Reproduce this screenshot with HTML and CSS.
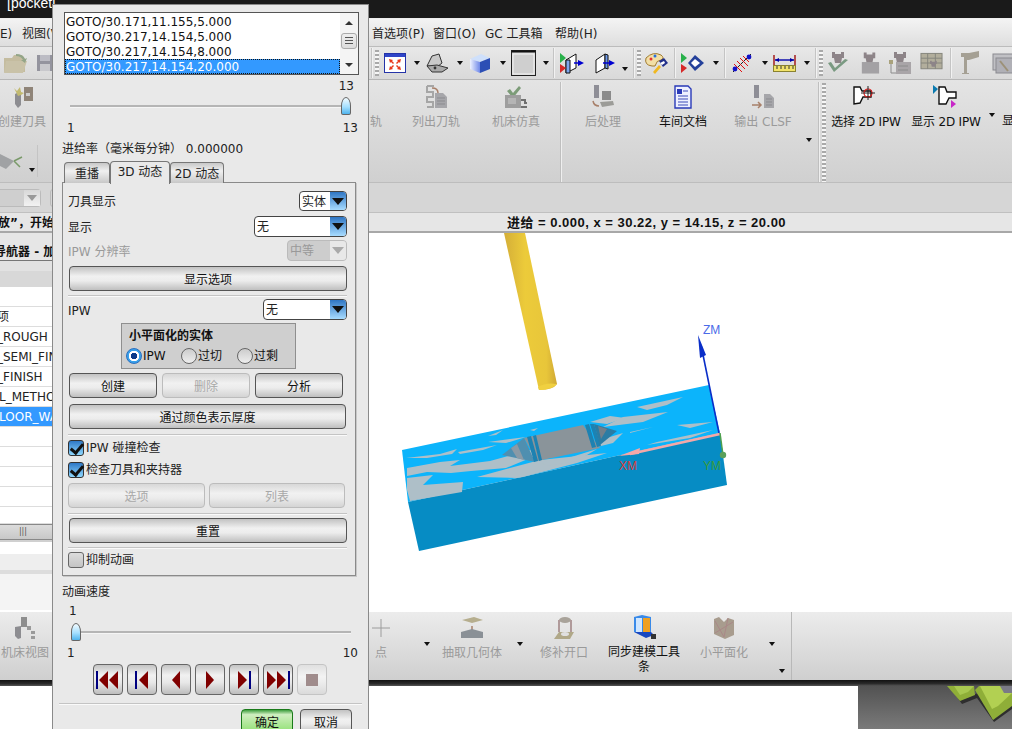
FILE: index.html
```html
<!DOCTYPE html>
<html lang="zh">
<head>
<meta charset="utf-8">
<title>pocket</title>
<link rel="stylesheet" href="styles.css">
</head>
<body>
<svg class="defs" width="0" height="0">
  <defs>
    <symbol id="gray-tool" viewBox="0 0 24 24"><path d="M6 1h3v2h6V1h3v6h-2l-1 5H9L8 7H6z" fill="#8d8488"/></symbol>
  </defs>
</svg>
<div class="app">
  <div class="titlebar"><span class="title-text">[pocketi</span></div>
  <div class="menubar">
    <span class="menu-left">E)</span><span class="menu-view">视图(V</span>
    <span class="menu-a">首选项(P)</span><span class="menu-b">窗口(O)</span><span class="menu-c">GC 工具箱</span><span class="menu-d">帮助(H)</span>
  </div>
  <div class="toolbar">
    <svg class="m3" width="25" height="23" viewBox="0 0 25 23"><path d="M1 6h8l2-3h8l3 4v13H1z" fill="#c4bc9f"/><path d="M3 9h21l-4 12H1z" fill="#c9c2a8"/><path d="M13 2q7 0 9 5l2-1-2 5-4-3h2q-2-4-7-4z" fill="#93a588"/></svg>
    <svg class="m8" width="18" height="20" viewBox="0 0 18 20"><rect x="1" y="2" width="16" height="16" fill="#94949e"/><rect x="4" y="2" width="10" height="6" fill="#bcbcc4"/><rect x="4" y="11" width="10" height="7" fill="#c8c8cc"/></svg>
    <span class="tb-gap"></span>
    <i class="vsep m2"></i><i class="grip m2"></i>
    <svg class="m5" width="22" height="20" viewBox="0 0 22 20"><rect x=".5" y=".5" width="21" height="19" fill="#fff" stroke="#2433a8"/><rect x="1" y="1" width="20" height="3" fill="#2f45c8"/><path d="M5 6l4 1-1 1 2 2-1 1-2-2-1 1zM17 6l-4 1 1 1-2 2 1 1 2-2 1 1zM5 17l4-1-1-1 2-2-1-1-2 2-1-1zM17 17l-4-1 1-1-2-2 1-1 2 2 1-1z" fill="#e8381c"/></svg>
    <i class="arrow m8"></i>
    <svg class="m6" width="23" height="20" viewBox="0 0 23 20"><path d="M1 13L6 3l7-2 3 9-5 4z" fill="#c9c9c9" stroke="#333"/><path d="M1 13l10-1 11 3-6 4H6z" fill="#aaa" stroke="#333"/><circle cx="9" cy="15" r="1.4" fill="#333"/></svg>
    <i class="arrow m8"></i>
    <svg class="m6" width="22" height="21" viewBox="0 0 22 21"><defs><linearGradient id="cubeg" x1="0" x2="1"><stop offset="0" stop-color="#eef2ff"/><stop offset="1" stop-color="#6f88e8"/></linearGradient></defs><path d="M1 6l11-5 9 4-10 4z" fill="#cfe0fb"/><path d="M1 6l10 3v11L1 16z" fill="url(#cubeg)"/><path d="M11 9l10-4v11l-10 4z" fill="#2c4fb5"/></svg>
    <i class="arrow m9"></i>
    <svg class="m5" width="25" height="26" viewBox="0 0 25 26"><rect x=".5" y=".5" width="24" height="25" fill="#d0d0d0" stroke="#222"/><rect x=".5" y=".5" width="24" height="2" fill="#111"/><rect x="2" y="4" width="21" height="20" fill="#cfcfcf" stroke="#f4f4f4"/></svg>
    <i class="arrow m7"></i>
    <i class="vsep m4"></i>
    <svg class="m5" width="24" height="22" viewBox="0 0 24 22"><path d="M6 8l10-6v14L6 21z" fill="#fff" stroke="#111"/><path d="M6 8l4 0v13H6z" fill="#7ea6ee" stroke="#111"/><path d="M0 1l6 5-6 5z" fill="#28b04a"/><path d="M0 12l6 4-6 5z" fill="#d62828"/><path d="M14 11h6" stroke="#0000d0" stroke-width="1.5"/><path d="M18 8l6 3-6 3z" fill="#0000d0"/></svg>
    <svg class="m11" width="20" height="22" viewBox="0 0 20 22"><path d="M1 8l9-6v14l-9 5z" fill="#fff" stroke="#111"/><path d="M10 2l3 1v14l-3-1z" fill="#6f9ae8" stroke="#111"/><path d="M8 11h6" stroke="#0000d0" stroke-width="1.5"/><path d="M14 8l6 3-6 3z" fill="#0000d0"/></svg>
    <i class="arrow arrow-low m7"></i>
    <i class="vsep m5"></i><i class="grip m2"></i>
    <svg class="m3" width="24" height="24" viewBox="0 0 24 24"><path d="M2 7q7-7 15-3 4 3 0 5-5 1-5 4 0 3-4 2Q0 14 2 7z" fill="#f2dfa6" stroke="#a07a30"/><circle cx="7" cy="8" r="1.5" fill="#e83030"/><circle cx="11" cy="5" r="1.5" fill="#2a70e0"/><path d="M15 10l5-3 4 5-5 4z" fill="#22308a"/><path d="M16 12l4-2 1 2-3 2z" fill="#fff"/><path d="M9 21l6-7 2 2-6 7z" fill="#f0b820"/></svg>
    <i class="vsep m6"></i>
    <svg class="m5" width="24" height="22" viewBox="0 0 24 22"><path d="M0 1l6 5-6 5z" fill="#28b04a"/><path d="M0 12l6 4-6 5z" fill="#d62828"/><path d="M14 3l9 8-9 8-7-8z" fill="#24409a"/><path d="M14 7l5 4-5 4-4-4z" fill="#fff"/></svg>
    <i class="arrow m8"></i>
    <i class="vsep m5"></i>
    <svg class="m4" width="24" height="24" viewBox="0 0 24 24"><path d="M3 21L21 3" stroke="#222"/><path d="M4 13l8 8M7 10l8 8M10 7l8 8M13 5l6 6" stroke="#e01010"/><circle cx="5" cy="18" r="2.4" fill="#1010c8"/><circle cx="19" cy="6" r="2.4" fill="#1010c8"/></svg>
    <i class="arrow m8"></i>
    <svg class="m5" width="23" height="20" viewBox="0 0 23 20"><path d="M1 2v10M22 2v10" stroke="#a01010" stroke-width="1.4"/><path d="M2 7h19" stroke="#0000a8" stroke-width="1.4"/><path d="M2 7l4-2v4zM21 7l-4-2v4z" fill="#0000a8"/><rect x=".5" y="12.5" width="22" height="6" fill="#f2e36a" stroke="#8a8230"/><path d="M4 13v3M8 13v3M12 13v3M16 13v3M20 13v3" stroke="#333"/></svg>
    <i class="arrow m8"></i>
    <i class="vsep m5"></i><i class="grip m2"></i>
    <svg class="m3" width="24" height="24" viewBox="0 0 24 24"><use href="#gray-tool"/><path d="M2 12l6 9L22 9l-3-1-10 9-4-6z" fill="#7a9a82"/></svg>
    <svg class="m8" width="23" height="24" viewBox="0 0 24 24"><use href="#gray-tool"/><rect x="4" y="11" width="18" height="12" fill="#a3a1a4"/></svg>
    <svg class="m7" width="24" height="24" viewBox="0 0 24 24"><use href="#gray-tool"/><rect x="1" y="9" width="4" height="4" fill="#a9a27c"/><rect x="8" y="11" width="15" height="12" fill="#a9a5a8"/><path d="M3 13v9h5M10 15h10M10 19h10" stroke="#8c8c8c" fill="none"/></svg>
    <svg class="m8" width="23" height="24" viewBox="0 0 24 24"><rect x="1" y="2" width="22" height="16" fill="#b2ae9c" stroke="#85857c"/><path d="M1 7h22M1 12h22M8 2v16M16 2v16" stroke="#85857c"/><use href="#gray-tool" x="7" y="9" width="14" height="14"/></svg>
    <i class="vsep m7"></i>
    <svg class="m8" width="20" height="24" viewBox="0 0 20 24"><path d="M1 2h8l10-2v6l-10 3H7v13h2v1H2v-1h2V6H1z" fill="#a5a094"/></svg>
    <svg class="m12" width="22" height="24" viewBox="0 0 22 24"><rect x="1" y="3" width="21" height="16" fill="#c0c0c4" stroke="#8a8a90"/><rect x="4" y="7" width="19" height="15" fill="#b0b0b6" stroke="#8a8a90"/><path d="M8 10l8 10" stroke="#9c9178" stroke-width="2"/></svg>
  </div>
  <div class="ribbon">
    <div class="rb-left">
      <div class="rb-item rb-first">
        <svg class="rb-icon" width="24" height="24" viewBox="0 0 24 24"><path d="M5 9l6-3v14l-3 3-3-4z" fill="#8d8d91"/><path d="M4 3l3 3 3-4 1 5 3 1-3 2-3 1-2-4z" fill="#c2ba70"/><rect x="14" y="2" width="9" height="14" fill="#8f8478"/><rect x="16" y="8" width="4" height="3" fill="#ccc"/></svg>
        <span class="rb-label dim">创建刀具</span>
      </div>
      <div class="rb-sub">
        <svg width="26" height="22" viewBox="0 0 26 22"><path d="M0 4l14 7-8 8-6-3z" fill="#a0a2a4"/><path d="M14 11l8-4M14 11l6 6" stroke="#7a9a6a" stroke-width="1.5"/></svg>
        <i class="arrow sub-arrow"></i>
      </div>
    </div>
    <div class="rb-right">
      <div class="rb-item rb-narrow"><span class="rb-icon-gap"></span><span class="rb-label dim">轨</span></div>
      <div class="rb-item">
        <svg class="rb-icon" width="24" height="24" viewBox="0 0 24 24"><path d="M3 1h7M3 1v6h6v5H3v5h6v5H3" fill="none" stroke="#a6a6a6" stroke-width="2"/><path d="M11 8h8l4 4v11H11z" fill="#a6a6aa"/><path d="M13 13h8M13 16h8M13 19h8" stroke="#8b8b8f"/><path d="M8 3q6 0 6 5" fill="none" stroke="#a8806a" stroke-width="1.5"/></svg>
        <span class="rb-label dim">列出刀轨</span>
      </div>
      <div class="rb-item">
        <svg class="rb-icon" width="24" height="24" viewBox="0 0 24 24"><path d="M3 6l3-2 3 4 6-7 2 2-8 10z" fill="#7c9c78"/><rect x="1" y="10" width="16" height="13" fill="#9e9e9e"/><rect x="4" y="13" width="8" height="6" fill="#b5b5b5"/><path d="M17 15h4v3h2M17 22h6" stroke="#707070" stroke-width="2" fill="none"/></svg>
        <span class="rb-label dim">机床仿真</span>
      </div>
      <i class="rb-sep sep-a"></i>
      <div class="rb-item">
        <svg class="rb-icon" width="24" height="24" viewBox="0 0 24 24"><rect x="3" y="0" width="5" height="13" fill="#8e8e96"/><rect x="11" y="6" width="9" height="9" fill="#8a8a8a"/><path d="M9 17l13-1 1 4-12 2z" fill="#9c9c98"/><path d="M2 16q1 5 6 5" stroke="#a8806a" stroke-width="1.5" fill="none"/></svg>
        <span class="rb-label dim">后处理</span>
      </div>
      <div class="rb-item">
        <svg class="rb-icon" width="24" height="24" viewBox="0 0 24 24"><path d="M4 1h13l3 3v19H4z" fill="#eef0ff" stroke="#2a3ab8" stroke-width="1.4"/><rect x="6" y="4" width="5" height="5" fill="#2a3ab8"/><path d="M7 11h10M7 14h10M7 17h10M7 20h10" stroke="#3a4ab8"/><path d="M12 6h5" stroke="#3a4ab8"/></svg>
        <span class="rb-label">车间文档</span>
      </div>
      <div class="rb-item">
        <svg class="rb-icon" width="24" height="24" viewBox="0 0 24 24"><rect x="3" y="0" width="5" height="13" fill="#8e8e96"/><path d="M13 9h6l4 4v10H13z" fill="#a6a6aa"/><path d="M15 14h6M15 17h6M15 20h6" stroke="#8b8b8f"/><path d="M1 20h9M7 17l3 3-3 3" stroke="#a8806a" stroke-width="1.5" fill="none"/></svg>
        <span class="rb-label dim">输出 CLSF</span>
      </div>
      <i class="arrow rb-more"></i>
      <i class="rb-sep sep-b"></i>
      <i class="grip grip-tall"></i>
      <div class="rb-item">
        <svg class="rb-icon" width="26" height="24" viewBox="0 0 26 24"><path d="M1 2h6l2 4h9v6h-8l-3 6-6 1z" fill="#fff" stroke="#111" stroke-width="1.4"/><circle cx="15" cy="8" r="4" fill="none" stroke="#e01818" stroke-width="1.2"/><path d="M15 1v14M8 8h14" stroke="#222"/></svg>
        <span class="rb-label tight">选择 2D IPW</span>
      </div>
      <div class="rb-item">
        <svg class="rb-icon" width="26" height="24" viewBox="0 0 26 24"><path d="M6 2h6l2 5h9v6h-7l-3 6-7 0z" fill="#fff" stroke="#111" stroke-width="1.4"/><path d="M0 0l5 4-5 5z" fill="#0a7ab0"/><path d="M18 15l5 4-5 4z" fill="#c828c8"/></svg>
        <span class="rb-label tight">显示 2D IPW</span>
      </div>
      <i class="arrow rb-drop"></i>
      <span class="rb-label rb-cut">显</span>
    </div>
  </div>
  <div class="selrow"><span class="fake-select"><i class="fake-arrow"></i></span><span class="fake-next"></span></div>
  <div class="status">
    <span class="status-left">放”，开始</span>
    <span class="status-text">进给 = 0.000, x = 30.22, y = 14.15, z = 20.00</span>
  </div>
  <div class="main">
    <div class="nav">
      <div class="nav-title">导航器 - 加</div>
      <div class="nav-head"></div>
      <div class="nav-row nav-blank"></div>
      <div class="nav-row">项</div>
      <div class="nav-row">_ROUGH</div>
      <div class="nav-row">_SEMI_FINISH</div>
      <div class="nav-row">_FINISH</div>
      <div class="nav-row nav-cut">L_METHOD</div>
      <div class="nav-row nav-sel">LOOR_WALL</div>
      <div class="nav-row"></div>
      <div class="nav-row"></div>
      <div class="nav-row"></div>
      <div class="nav-row"></div>
      <div class="nav-row nav-short"></div>
      <div class="nav-scroll"><span class="nav-thumb">|||</span></div>
      <div class="nav-tail"></div>
    </div>
    <div class="viewport">
      <svg class="scene" width="960" height="379" viewBox="52 233 960 379">
        <defs>
          <linearGradient id="tool" x1="0" x2="1" y1="0" y2="0">
            <stop offset="0" stop-color="#d4ae38"/><stop offset=".4" stop-color="#eccb3a"/><stop offset=".8" stop-color="#e8c63a"/><stop offset="1" stop-color="#d0a835"/>
          </linearGradient>
        </defs>
        <path d="M504 233h21l32 151q-4 6-18 6z" fill="url(#tool)"/>
        <path d="M538 387q8-5 19-3-3 5-18 6z" fill="#f0d040"/>
        <path d="M402 450L709 385 720 433 408 502z" fill="#0cb4fb"/>
        <path d="M408 502L720 433 727 485 419 551z" fill="#068cc4"/>
        <g fill="#aebfc8">
          <path d="M406 458l34-4 17-5-5 5-25 4z"/>
          <path d="M458 452l39-7-14 5-23 4z"/>
          <path d="M407 468l33-6 20-2-10 6 40-5 40-11 10 4-34 14-35 3-20 2-24-1-20 4z"/>
          <path d="M407 478l26-3-10 10 40-3-1 10-52 9-3-11z"/>
          <path d="M477 477l33-9 30-8 67-7-30 10-54 14-6 1z"/>
          <path d="M488 436l15-6-7 5zM488 442l38-5-20 6zM530 430l8-2-4 3z"/>
          <path d="M637 407l46-10-16 8-20 5z"/>
          <path d="M623 417l45-5-25 10-40 5z"/>
          <path d="M677 425l36-3-23 6z"/>
          <path d="M630 432l23-5-23 6z"/>
          <path d="M657 442l56-12-23 8-43 7z"/>
          <path d="M600 440l23-7-10 10-16 4z"/>
          <path d="M590 422l20-6 15 2-18 6z"/>
          <path d="M540 462l25-3 32-10-20 12-30 5z"/>
        </g>
        <path d="M524 438l59-13 17 23-63 13z" fill="#8a949a"/>
        <path d="M502 455l22-17 11 24z" fill="#4f8fb0"/>
        <path d="M511 448l6-4 7 16-7-2z" fill="#8a9aa6"/>
        <path d="M527 437l4-1 7 25-4 1zM533 436l3-1 6 25-3 1zM585 425l4-1 7 23-4 1zM590 424l4 0 7 22-4 1z" fill="#1d82b2"/>
        <path d="M594 424l23 7-17 14z" fill="#2a7ca4"/>
        <path d="M598 426l9 3-6 10z" fill="#707f8a"/>
        <path d="M719 433L701 345" stroke="#0a2ec8" stroke-width="1.6"/>
        <path d="M698 335l8 20-6 3z" fill="#0a2ec8"/>
        <path d="M720 434L630 454" stroke="#f4a8a8" stroke-width="2.5"/>
        <path d="M619 456l21-8-1 6z" fill="#f4a8a8"/>
        <path d="M720 433l3 22" stroke="#4da04d" stroke-width="1.5"/>
        <circle cx="723" cy="455" r="3.2" fill="#5aa05a"/>
        <text x="703" y="334" class="axis axis-z">ZM</text>
        <text x="619" y="470" class="axis axis-x">XM</text>
        <text x="703" y="470" class="axis axis-y">YM</text>
      </svg>
    </div>
  </div>
  <div class="bottombar">
    <div class="bb-item bb-left">
      <svg width="24" height="24" viewBox="0 0 24 24"><rect x="8" y="1" width="6" height="10" fill="#8e8e8e"/><path d="M2 11l6-1v12l-3 1-3-3z" fill="#8d8d91"/><path d="M14 10h4v4h-4zM18 15h4v3h-4zM18 20h4v3h-4z" fill="#9a9a9a"/></svg>
      <span class="rb-label dim">机床视图</span>
    </div>
    <span class="bb-gap"></span>
    <div class="bb-item bb-pt">
      <svg width="20" height="24" viewBox="0 0 20 24"><path d="M10 3v18M1 12h18" stroke="#9c9c9c"/></svg>
      <span class="rb-label dim">点</span>
    </div>
    <i class="arrow bb-a1"></i>
    <div class="bb-item bb-b">
      <svg width="26" height="24" viewBox="0 0 26 24"><path d="M3 4l12-3 9 3-11 3z" fill="#b6ae8e"/><path d="M13 10v5" stroke="#a8806a" stroke-width="1.5"/><path d="M2 16l11-3 11 3v6H2z" fill="#8a9096"/></svg>
      <span class="rb-label dim">抽取几何体</span>
    </div>
    <i class="arrow bb-a2"></i>
    <div class="bb-item bb-c">
      <svg width="24" height="24" viewBox="0 0 24 24"><ellipse cx="13" cy="4" rx="6" ry="3" fill="#a9a39a"/><path d="M7 4v12M19 4v12" stroke="#b09a9a" stroke-width="2"/><path d="M7 16h15l-4 7H2z" fill="#b0a888"/><ellipse cx="13" cy="18" rx="4" ry="2" fill="#e0e0e0"/></svg>
      <span class="rb-label dim">修补开口</span>
    </div>
    <div class="bb-item bb-d">
      <svg width="26" height="26" viewBox="0 0 26 26"><path d="M3 3l8-2 9 2v15H3z" fill="#3a8ae8"/><path d="M5 4h6v14H5z" fill="#cfe6ff"/><path d="M12 4h7v14h-7z" fill="#f0a020"/><path d="M3 18h17l3 3-8 3z" fill="#1848c0"/><rect x="20" y="20" width="5" height="5" fill="#333"/></svg>
      <span class="rb-label bb-wrap">同步建模工具条</span>
    </div>
    <div class="bb-item bb-e">
      <svg width="24" height="24" viewBox="0 0 24 24"><path d="M2 3l5-2 5 5 4-4 6 2v15l-9 4-11-5z" fill="#a89c8e"/><path d="M3 5l9 16 4-19M3 17L21 6" stroke="#a88" fill="none"/></svg>
      <span class="rb-label dim">小平面化</span>
    </div>
    <i class="arrow bb-a3"></i>
    <i class="arrow bb-a4"></i>
    <i class="bb-sep"></i>
  </div>
  <div class="blackline"></div>
  <div class="foot">
    <div class="corner">
      <svg class="corner-art" width="154" height="43" viewBox="858 686 154 43">
        <path d="M949 686l13 18 15-6 17 24 18-13v-5l-18 13-16-24-14 6-10-13z" fill="#2e2e2e"/>
        <path d="M947 686h27l1 9-15 6z" fill="#8fae38"/>
        <path d="M954 686h20l-6 6-8 3z" fill="#a8c850"/>
        <path d="M975 690l18 30 19-14v-20h-33z" fill="#8fae38"/>
        <path d="M980 686h32v7l-14 13-6 3z" fill="#b2d052"/>
        <path d="M1000 686h12v7h-8z" fill="#7a7a86"/>
      </svg>
    </div>
  </div>
</div>

<div class="dialog">
  <div class="listbox">
    <div class="list-rows">
      <div class="list-row">GOTO/30.171,11.155,5.000</div>
      <div class="list-row">GOTO/30.217,14.154,5.000</div>
      <div class="list-row">GOTO/30.217,14.154,8.000</div>
      <div class="list-row list-sel">GOTO/30.217,14.154,20.000</div>
    </div>
    <div class="scrollbar">
      <i class="sb-up"></i>
      <span class="sb-thumb"></span>
      <i class="sb-down"></i>
    </div>
  </div>
  <div class="slider-val val-end">13</div>
  <div class="slider sl-top"><i class="track"></i><i class="thumb thumb-end"></i></div>
  <div class="slider-ends"><span>1</span><span>13</span></div>
  <div class="feed">进给率（毫米每分钟） 0.000000</div>
  <div class="tabs">
    <span class="tab tab-a">重播</span><span class="tab tab-active">3D 动态</span><span class="tab tab-c">2D 动态</span>
  </div>
  <div class="panel">
    <div class="row row1"><span class="row-label">刀具显示</span><span class="select sel-48"><span class="sel-text">实体</span><i class="sel-arrow"></i></span></div>
    <div class="row row2"><span class="row-label">显示</span><span class="select sel-93"><span class="sel-text">无</span><i class="sel-arrow"></i></span></div>
    <div class="row row3"><span class="row-label dim">IPW 分辨率</span><span class="select sel-60 sel-off"><span class="sel-text">中等</span><i class="sel-arrow"></i></span></div>
    <button class="btn btn-wide b1">显示选项</button>
    <hr class="sep s1">
    <div class="row row3"><span class="row-label">IPW</span><span class="select sel-84"><span class="sel-text">无</span><i class="sel-arrow"></i></span></div>
    <div class="group">
      <div class="group-title">小平面化的实体</div>
      <div class="radios">
        <span class="radio-item r-ipw"><i class="radio radio-on"></i>IPW</span>
        <span class="radio-item r-cut"><i class="radio"></i>过切</span>
        <span class="radio-item"><i class="radio"></i>过剩</span>
      </div>
    </div>
    <div class="btn-row b2">
      <button class="btn btn-88">创建</button>
      <button class="btn btn-88 btn-off">删除</button>
      <button class="btn btn-88">分析</button>
    </div>
    <button class="btn btn-thick b3">通过颜色表示厚度</button>
    <hr class="sep s2">
    <div class="check c1"><i class="box box-on"></i>IPW 碰撞检查</div>
    <div class="check c2"><i class="box box-on"></i>检查刀具和夹持器</div>
    <div class="btn-row b4">
      <button class="btn btn-opt btn-off">选项</button>
      <button class="btn btn-list btn-off">列表</button>
    </div>
    <hr class="sep s3">
    <button class="btn btn-wide b5">重置</button>
    <hr class="sep s4">
    <div class="check c3"><i class="box"></i>抑制动画</div>
  </div>
  <div class="speed">动画速度</div>
  <div class="slider-val val-start">1</div>
  <div class="slider sl-bot"><i class="track track-bot"></i><i class="thumb thumb-start"></i></div>
  <div class="slider-ends ends-bot"><span>1</span><span>10</span></div>
  <div class="transport">
    <button class="tbtn"><svg width="24" height="18" viewBox="0 0 24 18"><rect x="0" y="0" width="2" height="18" fill="#000080"/><path d="M3 9l9-9v18zM13 9l9-9v18z" fill="#800000"/></svg></button>
    <button class="tbtn"><svg width="14" height="18" viewBox="0 0 14 18"><rect x="0" y="0" width="2" height="18" fill="#000080"/><path d="M4 9l9-9v18z" fill="#800000"/></svg></button>
    <button class="tbtn"><svg width="10" height="18" viewBox="0 0 10 18"><path d="M1 9l8-9v18z" fill="#800000"/></svg></button>
    <button class="tbtn"><svg width="10" height="18" viewBox="0 0 10 18"><path d="M9 9L1 0v18z" fill="#800000"/></svg></button>
    <button class="tbtn"><svg width="14" height="18" viewBox="0 0 14 18"><rect x="12" y="0" width="2" height="18" fill="#000080"/><path d="M10 9L1 0v18z" fill="#800000"/></svg></button>
    <button class="tbtn"><svg width="24" height="18" viewBox="0 0 24 18"><rect x="22" y="0" width="2" height="18" fill="#000080"/><path d="M20 9l-9-9v18zM10 9L1 0v18z" fill="#800000"/></svg></button>
    <button class="tbtn tbtn-off"><svg width="12" height="12" viewBox="0 0 12 12"><rect width="12" height="12" fill="#a08c8c"/></svg></button>
  </div>
  <hr class="sep sep-dlg">
  <div class="actions">
    <button class="btn btn-ok">确定</button>
    <button class="btn btn-cancel">取消</button>
  </div>
</div>
</body>
</html>
```
FILE: styles.css
```css
* { box-sizing: border-box; }
html, body { margin: 0; padding: 0; }
body {
  width: 1012px; height: 729px; overflow: hidden; position: relative;
  font: 12px/16px "DejaVu Sans", "Noto Sans CJK SC", sans-serif;
  color: #111; background: #fff;
}
i { display: block; font-style: normal; flex: none; }
svg { display: block; flex: none; }
.defs { position: absolute; }
.app { width: 1012px; height: 729px; display: flex; flex-direction: column; overflow: hidden; }

.titlebar { height: 18px; background: #1a1a1a; color: #fff; font: 14px/6px "Liberation Sans", sans-serif; flex: none; overflow: hidden; }
.title-text { margin-left: 7px; }

.menubar { height: 28px; flex: none; display: flex; align-items: center; padding-top: 2px; background: linear-gradient(#f3f3f3, #dedede); border-top: 1px solid #eee; color: #222; }
.menu-left { width: 22px; }
.menu-view { width: 350px; }
.menu-a { width: 61px; }
.menu-b { width: 52px; }
.menu-c { width: 70px; }

.toolbar { height: 34px; flex: none; display: flex; align-items: center; background: linear-gradient(#e8e8e8, #d9d9d9); border-top: 1px solid #bcbcbc; border-bottom: 1px solid #b6b6b6; overflow: hidden; }
.tb-gap { width: 315px; flex: none; }
.vsep { width: 2px; height: 30px; background: #c4c4c4; border-right: 1px solid #f2f2f2; }
.grip { width: 4px; height: 26px; background: repeating-linear-gradient(#a9a9a9 0 2px, #f6f6f6 2px 4px); }
.arrow { width: 0; height: 0; border: 3px solid transparent; border-top: 4px solid #111; border-bottom: 0; }
.arrow-low { margin-top: 12px; }
.m2 { margin-left: 2px; } .m3 { margin-left: 3px; } .m4 { margin-left: 4px; } .m5 { margin-left: 5px; } .m6 { margin-left: 6px; } .m7 { margin-left: 7px; }
.m8 { margin-left: 8px; } .m9 { margin-left: 9px; } .m11 { margin-left: 11px; } .m12 { margin-left: 12px; }

.ribbon { height: 103px; flex: none; display: flex; background: linear-gradient(#e4e4e4, #d0d0d0); border-bottom: 1px solid #bdbdbd; }
.rb-left { width: 369px; flex: none; }
.rb-right { flex: 1; display: flex; min-width: 0; overflow: hidden; }
.rb-item { width: 80px; flex: none; display: flex; flex-direction: column; align-items: center; padding-top: 5px; }
.rb-first { width: 44px; }
.rb-narrow { width: 27px; padding-left: 1px; align-items: flex-start; }
.rb-icon-gap { height: 24px; flex: none; }
.rb-label { margin-top: 5px; white-space: nowrap; }
.tight { letter-spacing: -.2px; }
.dim { color: #9a9a9a; }
.rb-sub { display: flex; align-items: center; margin-top: 15px; border-right: 1px solid #c4c4c4; width: 38px; height: 32px; }
.sub-arrow { margin: 18px 0 0 3px; }
.rb-sep { width: 2px; height: 100px; background: #bfbfbf; border-right: 1px solid #efefef; margin-top: 2px; }
.sep-a { margin-left: 4px; margin-right: 1px; }
.sep-b { margin-left: 6px; }
.rb-more { margin: 58px 0 0 3px; }
.grip-tall { height: 100px; margin-left: 2px; margin-top: 3px; }
.rb-drop { margin: 33px 0 0 3px; }
.rb-cut { margin: 33px 0 0 7px; color: #111; }

.selrow { height: 30px; flex: none; background: #d6d6d6; display: flex; align-items: center; border-bottom: 1px solid #c0c0c0; }
.fake-select { width: 41px; height: 18px; display: flex; justify-content: flex-end; background: #cfcfcf; border: 1px solid #bbb; border-left: 0; border-radius: 0 4px 4px 0; }
.fake-arrow { width: 16px; height: 16px; background: linear-gradient(#d8d8d8, #f2f2f2); }
.fake-arrow::after { content: ""; display: block; margin: 5px auto 0; width: 0; height: 0; border: 5px solid transparent; border-top: 6px solid #999; border-bottom: 0; }
.fake-next { width: 6px; height: 18px; margin-left: 9px; border: 1px solid #bbb; border-radius: 3px; }

.status { height: 20px; flex: none; display: flex; align-items: center; padding-top: 2px; background: #e6e6e6; border-bottom: 2px solid #a8a8a8; font-weight: bold; }
.status-left { width: 507px; white-space: nowrap; overflow: hidden; text-indent: -2px; }
.status-text { font-family: "Liberation Sans", "Noto Sans CJK SC", sans-serif; font-size: 13px; letter-spacing: .49px; white-space: nowrap; }

.main { height: 379px; flex: none; display: flex; }
.nav { width: 52px; flex: none; overflow: hidden; background: #fff; white-space: nowrap; }
.nav-title { height: 28px; line-height: 38px; font-weight: bold; background: #e6e6e6; border-bottom: 1px solid #777; text-indent: -6px; }
.nav-head { height: 26px; background: linear-gradient(#e2e2e2 0 40%, #d8d8d8 40%); }
.nav-row { height: 20px; line-height: 21px; border-bottom: 1px solid #ddd; text-indent: -3px; background: #fff; color: #222; }
.nav-cut { text-indent: -1px; }
.nav-sel { background: #3399ff; color: #fff; text-indent: -1px; }
.nav-short { height: 17px; }
.nav-scroll { height: 16px; background: linear-gradient(#dcdcdc, #c8c8c8); border-top: 1px solid #888; border-bottom: 1px solid #888; text-align: right; padding-right: 25px; line-height: 14px; color: #555; font-size: 8px; }
.nav-tail { height: 70px; background: linear-gradient(#d0d0d0 0 2px, #fff 2px 14px, #eee 14px 30px, #ddd 30px 34px, #f4f4f4 34px); }
.viewport { flex: 1; min-width: 0; background: #fff; }
.axis { font: 12px "Liberation Sans", sans-serif; }
.axis-z { fill: #4a6ae8; }
.axis-x { fill: #d84040; }
.axis-y { fill: #3a9a3a; }

.bottombar { height: 68px; flex: none; display: flex; background: linear-gradient(#ececec, #cfcfcf); }
.bb-item { flex: none; display: flex; flex-direction: column; align-items: center; padding-top: 4px; }
.bb-item .rb-label { margin-top: 5px; }
.bb-left { width: 50px; }
.bb-gap { width: 319px; flex: none; }
.bb-pt { width: 24px; }
.bb-a1 { margin: 30px 0 0 31px; }
.bb-b { width: 60px; margin-left: 12px; }
.bb-a2 { margin: 30px 0 0 15px; }
.bb-c { width: 60px; margin-left: 11px; }
.bb-d { width: 76px; margin-left: 12px; padding-top: 2px; }
.bb-wrap { white-space: normal; text-align: center; width: 76px; line-height: 15px; }
.bb-e { width: 60px; margin-left: 12px; }
.bb-a3 { margin: 30px 0 0 15px; }
.bb-a4 { margin: 57px 0 0 4px; }
.bb-sep { width: 1px; height: 68px; background: #b8b8b8; margin-left: 6px; }

.blackline { height: 6px; flex: none; background: linear-gradient(#111, #2a2a2a 60%, #555); }
.foot { flex: 1; display: flex; justify-content: flex-end; background: #fff; }
.corner { width: 154px; background: linear-gradient(#525252, #7a7a7a); }

.dialog {
  position: absolute; left: 52px; top: 4px; width: 317px; height: 740px;
  background: #e9e9e9; border: 1px solid #8a8a8a; padding: 7px 9px 0;
}
.listbox { margin-left: 2px; height: 63px; border: 1px solid #555; background: #fff; display: flex; }
.list-rows { flex: 1; padding-top: 1px; min-width: 0; }
.list-row { height: 15px; line-height: 17px; padding-left: 1px; white-space: nowrap; color: #111; }
.list-sel { background: #3399ff; color: #fff; outline: 1px dotted #111; outline-offset: -1px; }
.scrollbar { width: 18px; display: flex; flex-direction: column; align-items: center; background: #f4f4f4; padding-top: 8px; }
.sb-up { width: 0; height: 0; border: 4px solid transparent; border-bottom: 4px solid #333; border-top: 0; }
.sb-thumb { display: block; width: 16px; height: 16px; margin-top: 8px; background: repeating-linear-gradient(#555 0 1px, transparent 1px 3px) center/8px 9px no-repeat, linear-gradient(#eee, #dcdcdc); border: 1px solid #aaa; border-radius: 3px; }
.sb-down { width: 0; height: 0; border: 4px solid transparent; border-top: 4px solid #333; border-bottom: 0; margin-top: 14px; }

.slider-val { height: 14px; color: #222; }
.val-end { margin-top: 3px; text-align: right; padding-right: 5px; }
.slider { position: relative; display: flex; align-items: center; }
.sl-top { height: 19px; margin-top: 5px; padding: 0 14px 0 8px; }
.track { flex: 1; height: 3px; background: #b5b5b5; border-bottom: 1px solid #f5f5f5; }
.thumb { position: absolute; top: 0; width: 10px; height: 18px; border: 1px solid #666; border-radius: 5px 5px 2px 2px / 9px 9px 2px 2px; background: linear-gradient(#f2fbff, #a6e0ff 55%, #4fb4ee); }
.thumb-end { right: 8px; }
.slider-ends { display: flex; justify-content: space-between; height: 14px; margin-top: 4px; padding: 0 1px 0 5px; color: #222; }
.feed { margin-top: 7px; height: 14px; white-space: pre; color: #222; }
.tabs { display: flex; height: 21px; margin-top: 7px; padding-left: 2px; align-items: flex-end; position: relative; z-index: 1; }
.tab { height: 21px; line-height: 23px; text-align: center; border: 1px solid #777; border-bottom: 0; border-radius: 4px 4px 0 0; background: linear-gradient(#c8c8c8, #f0f0f0 40%, #c8c8c8); color: #222; }
.tab-a { width: 46px; }
.tab-active { width: 60px; height: 23px; line-height: 21px; background: #e9e9e9; margin-bottom: -1px; }
.tab-c { width: 54px; }

.panel { width: 294px; height: 394px; margin-top: -1px; border: 1px solid #8a8a8a; padding: 0 8px 0 5px; background: #e9e9e9; box-shadow: 1px 1px 0 #c8c8c8; }
.row { display: flex; justify-content: space-between; align-items: center; color: #222; }
.row-label { padding-top: 2px; }
.row1 { height: 20px; margin-top: 8px; }
.row2 { height: 21px; margin-top: 5px; }
.row3 { height: 21px; margin-top: 3px; }
.select { display: flex; height: 100%; background: #fff; border: 1px solid #444; border-radius: 4px; overflow: hidden; }
.sel-48 { width: 48px; } .sel-93 { width: 93px; } .sel-60 { width: 60px; } .sel-84 { width: 84px; }
.sel-text { flex: 1; padding-left: 2px; line-height: 21px; }
.sel-arrow { width: 16px; background: linear-gradient(#2f76c4, #a8dcff); }
.sel-arrow::after { content: ""; display: block; margin: 6px auto 0; width: 0; height: 0; border: 6px solid transparent; border-top: 7px solid #111; border-bottom: 0; }
.sel-off { background: #cdcdcd; border-color: #bbb; }
.sel-off .sel-text { color: #999; }
.sel-off .sel-arrow { background: #e8e8e8; }
.sel-off .sel-arrow::after { border-top-color: #aaa; }

.btn { display: block; height: 25px; padding: 2px 0 0; font: inherit; color: #111; border: 1px solid #555; border-radius: 4px; background: linear-gradient(#c2c2c2, #f1f1f1 40%, #ececec 60%, #bfbfbf); }
.btn-wide { width: 278px; margin-left: 1px; }
.btn-thick { width: 277px; margin-left: 1px; }
.btn-88 { width: 88px; }
.btn-opt { width: 137px; margin-left: -1px; }
.btn-list { width: 136px; }
.btn-off { color: #a8a8a8; border-color: #bcbcbc; background: linear-gradient(#d8d8d8, #f1f1f1 40%, #ececec 60%, #d4d4d4); }
.btn-row { display: flex; gap: 5px; margin-left: 1px; }
.b4 { gap: 4px; }
.b1 { margin-top: 5px; }
.b2 { margin-top: 4px; }
.b3 { margin-top: 6px; }
.b4 { margin-top: 5px; }
.b5 { margin-top: 4px; }
.sep { height: 2px; margin: 0; border: 0; background: linear-gradient(#c4c4c4 50%, #fafafa 50%); }
.s1 { margin-top: 4px; margin-bottom: -1px; }
.s2 { margin-top: 5px; margin-bottom: -1px; }
.s3 { margin-top: 5px; margin-bottom: -1px; }
.s4 { margin-top: 4px; margin-bottom: -1px; }
.group { width: 175px; height: 46px; margin: 3px 0 0 53px; background: #cfcfcf; border: 1px solid #8f8f8f; padding: 4px 0 0 4px; }
.group-title { font-weight: bold; padding-left: 3px; height: 14px; }
.radios { display: flex; margin-top: 6px; align-items: center; height: 16px; }
.radio-item { display: flex; align-items: center; gap: 1px; width: 56px; }
.r-ipw { width: 55px; }
.radio { width: 16px; height: 16px; border: 1px solid #666; border-radius: 50%; background: linear-gradient(#ccc, #eee); }
.radio-on { background: radial-gradient(circle, #0a3a8a 0 3px, #fff 3.5px 5px, #3aa0ea 5.5px); border-color: #2a70c0; }
.check { display: flex; align-items: center; gap: 2px; height: 16px; color: #222; }
.c1 { margin-top: 5px; }
.c2 { margin-top: 6px; }
.c3 { margin-top: 4px; }
.box { width: 16px; height: 16px; border: 1px solid #666; border-radius: 3px; background: linear-gradient(#dcdcdc, #c4c4c4); }
.box-on { border-color: #333; background: linear-gradient(#2e78c6, #8fd8ff); }
.box-on::after { content: ""; display: block; width: 5px; height: 10px; margin: 0 0 0 4px; border: solid #111; border-width: 0 3px 3px 0; transform: rotate(40deg); }

.speed { margin-top: 8px; height: 14px; color: #222; }
.val-start { margin-top: 5px; padding-left: 7px; }
.sl-bot { height: 18px; margin-top: 6px; padding: 0 8px 0 10px; }
.thumb-start { left: 9px; }
.ends-bot { padding: 0 1px 0 5px; margin-top: 4px; }
.transport { display: flex; gap: 4px; margin: 5px 0 0 31px; }
.tbtn { width: 30px; height: 31px; padding: 0; display: flex; align-items: center; justify-content: center; border: 1px solid #666; border-radius: 4px; background: linear-gradient(#c4c4c4, #f1f1f1 35%, #e8e8e8 60%, #bdbdbd); }
.tbtn-off { border-color: #c4c4c4; background: linear-gradient(#e0e0e0, #f3f3f3 40%, #ededed 60%, #dadada); }
.sep-dlg { margin: 8px -3px 0; }
.actions { display: flex; gap: 7px; margin: 4px 0 0 179px; }
.btn-ok { width: 52px; border-color: #1a7a1a; background: linear-gradient(#3e9e3e, #cfeec0 20%, #8ee070 100%); }
.btn-cancel { width: 52px; }
```
